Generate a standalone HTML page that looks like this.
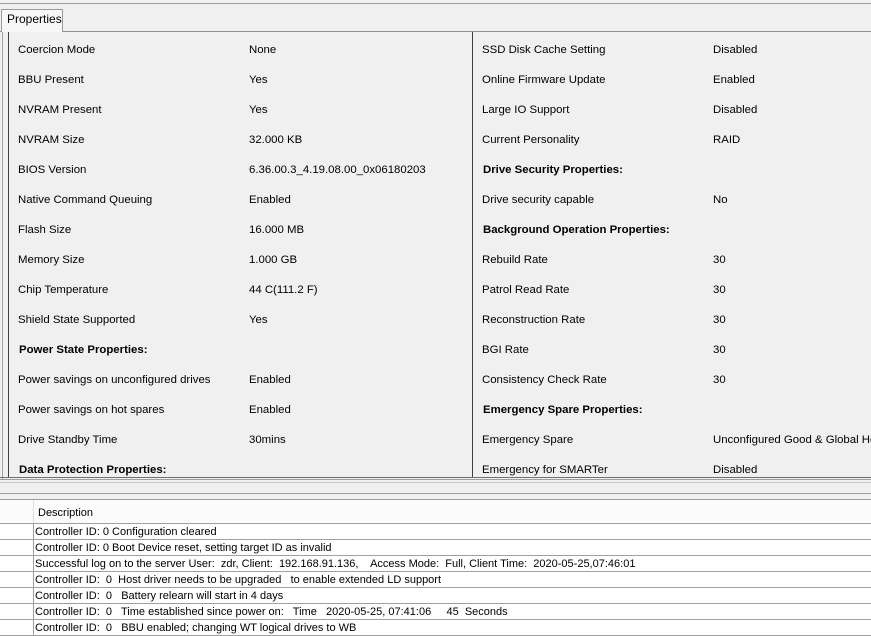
<!DOCTYPE html>
<html><head><style>
body{margin:0;width:871px;height:626px;background:#f0f0f0;font-family:"Liberation Sans",sans-serif;font-size:11.4px;color:#000;position:relative;overflow:hidden}
.a{position:absolute;white-space:nowrap}
.h{position:absolute;left:0;width:871px;height:1px}
.v{position:absolute;width:1px}
.b{font-weight:bold}
.p{position:absolute;left:0;top:2px;width:871px;height:0}
.row{position:absolute;left:0;width:871px;height:16px;background:#fff;border-bottom:1px solid #a0a0a0;box-sizing:border-box;font-size:11px}
.row span{position:absolute;left:35px;top:2px;white-space:nowrap}
.row i{position:absolute;left:33px;top:0;width:1px;height:16px;background:#a0a0a0}
</style></head><body>
<div class="h" style="top:3px;background:#a0a0a0"></div>
<div class="h" style="top:31px;background:#909090"></div>
<div class="a" style="left:1px;top:9px;width:60px;height:22px;border:1px solid #999;border-bottom:none;background:#f7f7f7"></div>
<div class="a" style="left:7px;top:12px;font-size:12px">Properties</div>
<div class="v" style="left:2px;top:32px;height:447px;background:#a0a0a0"></div>
<div class="v" style="left:8px;top:32px;height:446px;background:#404040"></div>
<div class="v" style="left:472px;top:32px;height:446px;background:#404040"></div>
<div class="h" style="top:477px;background:#707070"></div>
<div class="h" style="top:479px;background:#a0a0a0"></div>
<div class="h" style="top:482px;background:#c8c8c8"></div>
<div class="h" style="top:493px;background:#a0a0a0"></div>
<div class="h" style="top:499px;background:#a0a0a0"></div>
<div class="a" style="left:0;top:500px;width:871px;height:23px;background:#fbfbfb"></div>
<div class="v" style="left:33px;top:500px;height:23px;background:#e0e0e0"></div>
<div class="a" style="left:38px;top:507px;font-size:11px">Description</div>
<div class="h" style="top:523px;background:#a0a0a0"></div>
<div class="p">
<div class="a" style="left:18px;top:42px">Coercion Mode</div><div class="a" style="left:249px;top:42px">None</div>
<div class="a" style="left:18px;top:72px">BBU Present</div><div class="a" style="left:249px;top:72px">Yes</div>
<div class="a" style="left:18px;top:102px">NVRAM Present</div><div class="a" style="left:249px;top:102px">Yes</div>
<div class="a" style="left:18px;top:132px">NVRAM Size</div><div class="a" style="left:249px;top:132px">32.000 KB</div>
<div class="a" style="left:18px;top:162px">BIOS Version</div><div class="a" style="left:249px;top:162px">6.36.00.3_4.19.08.00_0x06180203</div>
<div class="a" style="left:18px;top:192px">Native Command Queuing</div><div class="a" style="left:249px;top:192px">Enabled</div>
<div class="a" style="left:18px;top:222px">Flash Size</div><div class="a" style="left:249px;top:222px">16.000 MB</div>
<div class="a" style="left:18px;top:252px">Memory Size</div><div class="a" style="left:249px;top:252px">1.000 GB</div>
<div class="a" style="left:18px;top:282px">Chip Temperature</div><div class="a" style="left:249px;top:282px">44 C(111.2 F)</div>
<div class="a" style="left:18px;top:312px">Shield State Supported</div><div class="a" style="left:249px;top:312px">Yes</div>
<div class="a b" style="left:19px;top:342px">Power State Properties:</div>
<div class="a" style="left:18px;top:372px">Power savings on unconfigured drives</div><div class="a" style="left:249px;top:372px">Enabled</div>
<div class="a" style="left:18px;top:402px">Power savings on hot spares</div><div class="a" style="left:249px;top:402px">Enabled</div>
<div class="a" style="left:18px;top:432px">Drive Standby Time</div><div class="a" style="left:249px;top:432px">30mins</div>
<div class="a b" style="left:19px;top:462px">Data Protection Properties:</div>

<div class="a" style="left:482px;top:42px">SSD Disk Cache Setting</div><div class="a" style="left:713px;top:42px">Disabled</div>
<div class="a" style="left:482px;top:72px">Online Firmware Update</div><div class="a" style="left:713px;top:72px">Enabled</div>
<div class="a" style="left:482px;top:102px">Large IO Support</div><div class="a" style="left:713px;top:102px">Disabled</div>
<div class="a" style="left:482px;top:132px">Current Personality</div><div class="a" style="left:713px;top:132px">RAID</div>
<div class="a b" style="left:483px;top:162px">Drive Security Properties:</div>
<div class="a" style="left:482px;top:192px">Drive security capable</div><div class="a" style="left:713px;top:192px">No</div>
<div class="a b" style="left:483px;top:222px">Background Operation Properties:</div>
<div class="a" style="left:482px;top:252px">Rebuild Rate</div><div class="a" style="left:713px;top:252px">30</div>
<div class="a" style="left:482px;top:282px">Patrol Read Rate</div><div class="a" style="left:713px;top:282px">30</div>
<div class="a" style="left:482px;top:312px">Reconstruction Rate</div><div class="a" style="left:713px;top:312px">30</div>
<div class="a" style="left:482px;top:342px">BGI Rate</div><div class="a" style="left:713px;top:342px">30</div>
<div class="a" style="left:482px;top:372px">Consistency Check Rate</div><div class="a" style="left:713px;top:372px">30</div>
<div class="a b" style="left:483px;top:402px">Emergency Spare Properties:</div>
<div class="a" style="left:482px;top:432px">Emergency Spare</div><div class="a" style="left:713px;top:432px">Unconfigured Good &amp; Global Hotspare</div>
<div class="a" style="left:482px;top:462px">Emergency for SMARTer</div><div class="a" style="left:713px;top:462px">Disabled</div>
</div>
<div class="row" style="top:524px"><i></i><span>Controller ID: 0 Configuration cleared</span></div>
<div class="row" style="top:540px"><i></i><span>Controller ID: 0 Boot Device reset, setting target ID as invalid</span></div>
<div class="row" style="top:556px"><i></i><span>Successful log on to the server User:&nbsp; zdr, Client:&nbsp; 192.168.91.136,&nbsp;&nbsp;&nbsp; Access Mode:&nbsp; Full, Client Time:&nbsp; 2020-05-25,07:46:01</span></div>
<div class="row" style="top:572px"><i></i><span>Controller ID:&nbsp; 0&nbsp; Host driver needs to be upgraded&nbsp;&nbsp; to enable extended LD support</span></div>
<div class="row" style="top:588px"><i></i><span>Controller ID:&nbsp; 0&nbsp;&nbsp; Battery relearn will start in 4 days</span></div>
<div class="row" style="top:604px"><i></i><span>Controller ID:&nbsp; 0&nbsp;&nbsp; Time established since power on:&nbsp;&nbsp; Time&nbsp;&nbsp; 2020-05-25, 07:41:06&nbsp;&nbsp;&nbsp;&nbsp; 45&nbsp; Seconds</span></div>
<div class="row" style="top:620px"><i></i><span>Controller ID:&nbsp; 0&nbsp;&nbsp; BBU enabled; changing WT logical drives to WB</span></div>
</body></html>
